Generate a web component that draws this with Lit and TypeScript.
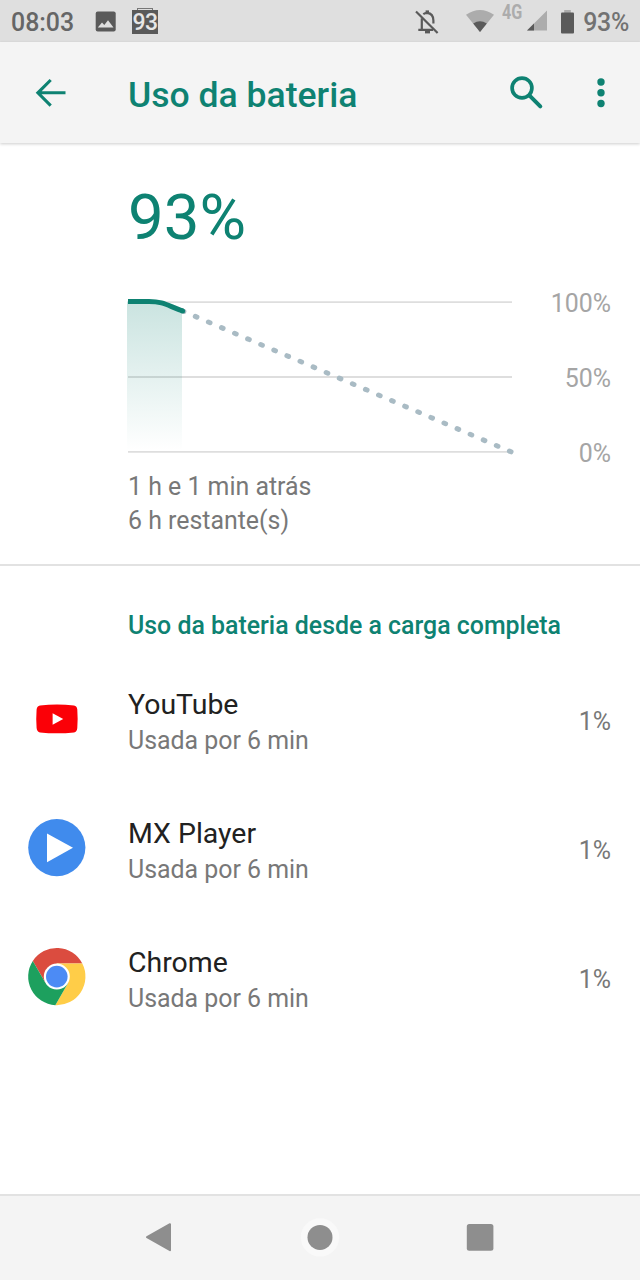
import { LitElement, html, css, svg } from "lit";
import { customElement } from "lit/decorators.js";

const youtube = svg`<svg width="58" height="58" viewBox="0 0 58 58">
  <path d="M12 15.4Q29 13.4 46 15.4Q49 16 49.3 19.5Q50 29 49.3 38Q49 41.9 46 42.4Q29 44.2 12 42.4Q9 41.9 8.6 38Q7.9 29 8.6 19.5Q9 16 12 15.4Z" fill="#fb0007"/>
  <path d="M24.6 23.2L35.2 29L24.6 34.8Z" fill="#fff"/></svg>`;

const mxPlayer = svg`<svg width="58" height="58" viewBox="0 0 58 58">
  <circle cx="28.8" cy="28.6" r="28.6" fill="#408bed"/>
  <path d="M19 14.4L45 28.8L19 43.2Z" fill="#fff"/></svg>`;

const chrome = svg`<svg width="58" height="58" viewBox="-28.8 -28.6 58 58">
  <path d="M-24 -15.58A28.6 28.6 0 0 1 25.5 -13H0L0 0L-11.26 6.5Z" fill="#db4c3f"/>
  <path d="M25.5 -13A28.6 28.6 0 0 1 -1.49 28.58L11.26 6.5L0 0V-13Z" fill="#ffcd48"/>
  <path d="M-1.49 28.58A28.6 28.6 0 0 1 -24 -15.58L-11.26 6.5L0 0L11.26 6.5Z" fill="#1da05e"/>
  <circle r="13" fill="#fff"/><circle r="10.8" fill="#4c8bf5"/></svg>`;

const apps = [
  { name: "YouTube", icon: youtube },
  { name: "MX Player", icon: mxPlayer },
  { name: "Chrome", icon: chrome },
];

@customElement("app-root")
export class AppRoot extends LitElement {
  static styles = css`
    :host {
      display: flex;
      flex-direction: column;
      box-sizing: border-box;
      width: 640px;
      height: 1280px;
      background: #fff;
      font: 400 24.9px Roboto, sans-serif;
      color: #787878;
      overflow: hidden;
    }
    svg { display: block; flex: none; overflow: visible; }
    .status {
      display: flex;
      align-items: center;
      height: 42px;
      padding: 0 11px;
      box-sizing: border-box;
      background: #dfdfdf;
      color: #666;
      font-weight: 500;
      line-height: 38px;
      flex: none;
    }
    .clock { width: 84px; padding-top: 3px; }
    .percent { padding-top: 3px; color: #727272; letter-spacing: -0.3px; }
    .level {
      width: 26px;
      height: 24px;
      margin: 2px 0 0 16px;
      background: #5a5a5a;
      color: #e6e6e6;
      font-weight: 500;
      font-size: 23px;
      line-height: 25px;
      text-align: center;
      letter-spacing: -0.5px;
      background-clip: padding-box;
    }
    .cap {
      width: 16px;
      height: 2px;
      margin: -25px 0 0 -21px;
      box-sizing: border-box;
      border: 1px solid #777;
      border-bottom: 0;
    }
    .spacer { flex: 1; }
    .bell { margin: 2px 27px 0 0; }
    .net {
      font-size: 19.5px;
      font-weight: 700;
      color: #acacac;
      width: 20px;
      margin: -16px 5px 0 8px;
      transform: scaleX(0.83);
      transform-origin: left;
    }
    .battery { margin: 1px 9px 0 14px; }
    .bar {
      display: flex;
      align-items: center;
      height: 101px;
      background: #f4f4f4;
      box-shadow: 0 1px 3px rgba(0, 0, 0, 0.2);
      box-sizing: border-box;
      padding: 0 35px 0 35px;
      flex: none;
    }
    .title {
      flex: 1;
      margin: 4px 0 0 62px;
      font-size: 35.56px;
      font-weight: 500;
      line-height: 44px;
      color: #0e8272;
    }
    .dots { margin-left: 54px; }
    .summary {
      padding: 40px 29px 0 128px;
      height: 423px;
      box-sizing: border-box;
      border-bottom: 2px solid #e2e2e2;
      flex: none;
    }
    .big { font-size: 63.6px; line-height: 70px; color: #0e8272; }
    .chart { display: flex; justify-content: space-between; margin-top: 33px; }
    .scale {
      display: flex;
      flex-direction: column;
      justify-content: space-between;
      box-sizing: border-box;
      height: 185px;
      margin-bottom: -1px;
      padding-top: 1px;
      text-align: right;
      line-height: 34px;
      color: #a5a5a5;
    }
    .times { line-height: 34px; }
    .section {
      margin: 43px 0 12px 128px;
      line-height: 34px;
      font-weight: 500;
      color: #0e8272;
      flex: none;
    }
    .row {
      display: flex;
      align-items: center;
      height: 129px;
      padding: 0 29px 0 28px;
      flex: none;
    }
    .row svg { margin-bottom: 1px; }
    .text { flex: 1; margin: 7px 0 0 42px; line-height: 36px; }
    .name { font-size: 28.44px; color: #212121; }
    .pct { padding-top: 3px; }
    .nav {
      display: flex;
      justify-content: center;
      align-items: center;
      gap: 100px;
      height: 86px;
      margin-top: auto;
      box-sizing: border-box;
      border-top: 2px solid #e2e2e2;
      background: #f4f4f4;
      flex: none;
    }
  `;

  render() {
    return html`
      <div class="status">
        <span class="clock">08:03</span>
        <svg width="21" height="21" viewBox="0 0 21 21">
          <rect x=".7" y=".5" width="20" height="20" rx="2" fill="#5a5a5a"/>
          <path d="M2.8 16.5L7 11.5L9.3 14L13 9.3L18.5 16.5Z" fill="#dfdfdf"/>
        </svg>
        <span class="level">93</span>
        <span class="cap"></span>
        <span class="spacer"></span>
        <svg class="bell" width="24" height="24" viewBox="0 0 24 24" fill="none" stroke="#5a5a5a" stroke-width="2.2">
          <path d="M1 1.5L22.6 23"/>
          <path d="M6.8 8.2V19.8M3.3 19.8H18M8.3 4.2Q10 2.9 12.3 2.9Q18.3 3.6 18.4 10.5V13.4"/>
          <path d="M12.3 .4V3" stroke-width="3.4"/>
          <path d="M10 22.2H15" stroke-width="2.4"/>
        </svg>
        <svg width="28" height="22" viewBox="0 0 28 22">
          <path d="M0 4.8Q14 -4.8 28 4.8L14 22Z" fill="#acacac"/>
          <path d="M7.2 13.5Q14 9.2 20.8 13.5L14 22Z" fill="#5a5a5a"/>
        </svg>
        <span class="net">4G</span>
        <svg width="20" height="20" viewBox="0 0 20 20">
          <path d="M0 19.5L20 -.5V19.5Z" fill="#acacac"/>
          <path d="M0 19.5L7 12.5V19.5Z" fill="#5a5a5a"/>
        </svg>
        <svg class="battery" width="13" height="24" viewBox="0 0 13 24">
          <rect x="3.2" y="0" width="6.6" height="3" fill="#acacac"/>
          <rect y="2.4" width="13" height="21.2" rx="1" fill="#5a5a5a"/>
        </svg>
        <span class="percent">93%</span>
      </div>

      <div class="bar">
        <svg width="31" height="28" viewBox="0 0 31 28" fill="none" stroke="#0e8272" stroke-width="3.1">
          <path d="M30.5 13.8H3M15.7 1L2.9 13.8L15.7 26.6"/>
        </svg>
        <span class="title">Uso da bateria</span>
        <svg width="33" height="33" viewBox="0 0 33 33" fill="none" stroke="#0e8272">
          <circle cx="12" cy="12" r="9.9" stroke-width="3.7"/>
          <path d="M19.6 19.6L30.3 30.3" stroke-width="4" stroke-linecap="round"/>
        </svg>
        <svg class="dots" width="8" height="30" viewBox="0 0 8 30" fill="#0e8272">
          <circle cx="4" cy="4" r="3.7"/><circle cx="4" cy="14.8" r="3.7"/><circle cx="4" cy="25.5" r="3.7"/>
        </svg>
      </div>

      <div class="summary">
        <div class="big">93%</div>
        <div class="chart">
          <svg width="384" height="184" viewBox="128 286 384 184">
            <defs>
              <linearGradient id="fade" x1="0" y1="0" x2="0" y2="1">
                <stop offset="0" stop-color="#0e8272" stop-opacity=".22"/>
                <stop offset="1" stop-color="#0e8272" stop-opacity="0"/>
              </linearGradient>
            </defs>
            <path d="M128 302.2H512M128 377H512M128 451.8H512" stroke="#dedede" stroke-width="1.8"/>
            <path d="M127 301.5H150C163 301.5 170 307 182 310.5V451H127Z" fill="url(#fade)"/>
            <path d="M182.2 310.8L511.5 452" stroke="#a9bbc4" stroke-width="5" stroke-linecap="round" stroke-dasharray="1.8 12.44"/>
            <path d="M128 301.5H149C164 301.5 168 306 182.8 311" fill="none" stroke="#0e8272" stroke-width="5"/>
            <circle cx="182.6" cy="311" r="2.5" fill="#0e8272"/>
          </svg>
          <div class="scale"><span>100%</span><span>50%</span><span>0%</span></div>
        </div>
        <div class="times">1 h e 1 min atrás<br />6 h restante(s)</div>
      </div>

      <div class="section">Uso da bateria desde a carga completa</div>
      ${apps.map((app) => html`
        <div class="row">
          ${app.icon}
          <div class="text">
            <div class="name">${app.name}</div>
            <div>Usada por 6 min</div>
          </div>
          <span class="pct">1%</span>
        </div>`)}

      <div class="nav">
        <svg width="60" height="40" viewBox="0 0 60 40">
          <path d="M17 19.2L40 6.2V32.2Z" fill="#8e8e8e" stroke="#8e8e8e" stroke-width="2" stroke-linejoin="round"/>
        </svg>
        <svg width="60" height="40" viewBox="0 0 60 40">
          <circle cx="30" cy="19.4" r="19.2" fill="#f9f9f9"/><circle cx="30" cy="19.4" r="12.5" fill="#8e8e8e"/>
        </svg>
        <svg width="60" height="40" viewBox="0 0 60 40">
          <rect x="16.8" y="6" width="26.6" height="26.8" rx="2.5" fill="#8e8e8e"/>
        </svg>
      </div>
    `;
  }
}
